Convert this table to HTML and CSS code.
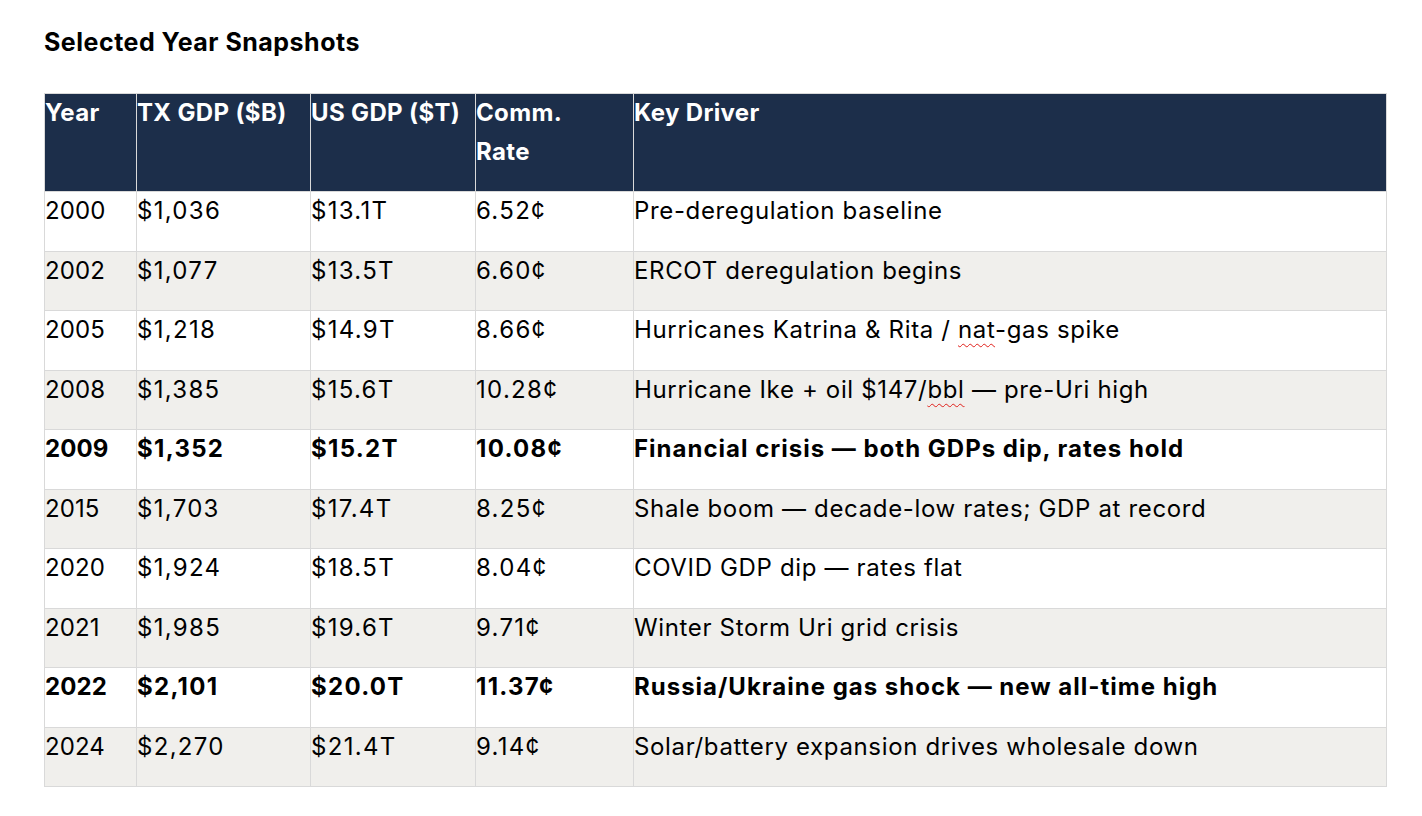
FILE: index.html
```html
<!DOCTYPE html>
<html lang="en">
<head>
<meta charset="utf-8">
<title>Selected Year Snapshots</title>
<link rel="stylesheet" href="styles.css">
</head>
<body>
<div class="page">
  <h2 class="title">Selected Year Snapshots</h2>
  <table class="snap">
    <colgroup>
      <col class="c-year"><col class="c-tx"><col class="c-us"><col class="c-rate"><col class="c-driver">
    </colgroup>
    <thead>
      <tr><th>Year</th><th>TX GDP ($B)</th><th>US GDP ($T)</th><th>Comm.<br>Rate</th><th>Key Driver</th></tr>
    </thead>
    <tbody>
      <tr><td class="yr">2000</td><td class="num">$1,036</td><td class="num">$13.1T</td><td class="num">6.52¢</td><td>Pre-deregulation baseline</td></tr>
      <tr class="alt"><td class="yr">2002</td><td class="num">$1,077</td><td class="num">$13.5T</td><td class="num">6.60¢</td><td>ERCOT deregulation begins</td></tr>
      <tr><td class="yr">2005</td><td class="num">$1,218</td><td class="num">$14.9T</td><td class="num">8.66¢</td><td>Hurricanes Katrina &amp; Rita / <span class="spell">nat</span>-gas spike</td></tr>
      <tr class="alt"><td class="yr">2008</td><td class="num">$1,385</td><td class="num">$15.6T</td><td class="num">10.28¢</td><td>Hurricane Ike + oil $147/<span class="spell">bbl</span> — pre-Uri high</td></tr>
      <tr class="strong"><td class="yr">2009</td><td class="num">$1,352</td><td class="num">$15.2T</td><td class="num">10.08¢</td><td>Financial crisis — both GDPs dip, rates hold</td></tr>
      <tr class="alt"><td class="yr">2015</td><td class="num">$1,703</td><td class="num">$17.4T</td><td class="num">8.25¢</td><td>Shale boom — decade-low rates; GDP at record</td></tr>
      <tr><td class="yr">2020</td><td class="num">$1,924</td><td class="num">$18.5T</td><td class="num">8.04¢</td><td>COVID GDP dip — rates flat</td></tr>
      <tr class="alt"><td class="yr">2021</td><td class="num">$1,985</td><td class="num">$19.6T</td><td class="num">9.71¢</td><td>Winter Storm Uri grid crisis</td></tr>
      <tr class="strong"><td class="yr">2022</td><td class="num">$2,101</td><td class="num">$20.0T</td><td class="num">11.37¢</td><td>Russia/Ukraine gas shock — new all-time high</td></tr>
      <tr class="alt"><td class="yr">2024</td><td class="num">$2,270</td><td class="num">$21.4T</td><td class="num">9.14¢</td><td>Solar/battery expansion drives wholesale down</td></tr>
    </tbody>
  </table>
</div>
</body>
</html>
```
FILE: styles.css
```css
html, body {
  margin: 0;
  padding: 0;
  background: #ffffff;
}
body {
  font-family: Inter, "Liberation Sans", Arial, sans-serif;
  color: #000000;
}
.page {
  padding: 26px 0 0 44px;
}
.title {
  margin: 0 0 35px 0;
  font-size: 25px;
  line-height: 32px;
  font-weight: 700;
  letter-spacing: 0.5px;
}
.snap {
  border-collapse: collapse;
  table-layout: fixed;
  width: 1342px;
  font-size: 24px;
}
.c-year { width: 92px; }
.c-tx { width: 174px; }
.c-us { width: 165px; }
.c-rate { width: 158px; }
.c-driver { width: 753px; }
.snap th,
.snap td {
  border: 1px solid #d9d9d9;
  padding: 0 0 20px 0;
  line-height: 38.5px;
  text-align: left;
  vertical-align: top;
  white-space: nowrap;
}
.snap th {
  background: #1c2e4a;
  color: #ffffff;
  font-weight: 700;
  letter-spacing: 0.35px;
}
.snap td {
  font-weight: 400;
  letter-spacing: 0.65px;
}
.snap td.yr {
  letter-spacing: 0.1px;
}
.snap td.num {
  letter-spacing: 1.3px;
}
.snap tr.alt td {
  background: #f0efec;
}
.snap tr.strong td {
  font-weight: 700;
  letter-spacing: 1px;
}
.snap tr.strong td.yr {
  letter-spacing: 0.1px;
}
.snap tr.strong td.num {
  letter-spacing: 1.3px;
}
.spell {
  text-decoration: underline wavy #e0201b;
  text-decoration-thickness: 1px;
  text-underline-offset: 5px;
}
```
